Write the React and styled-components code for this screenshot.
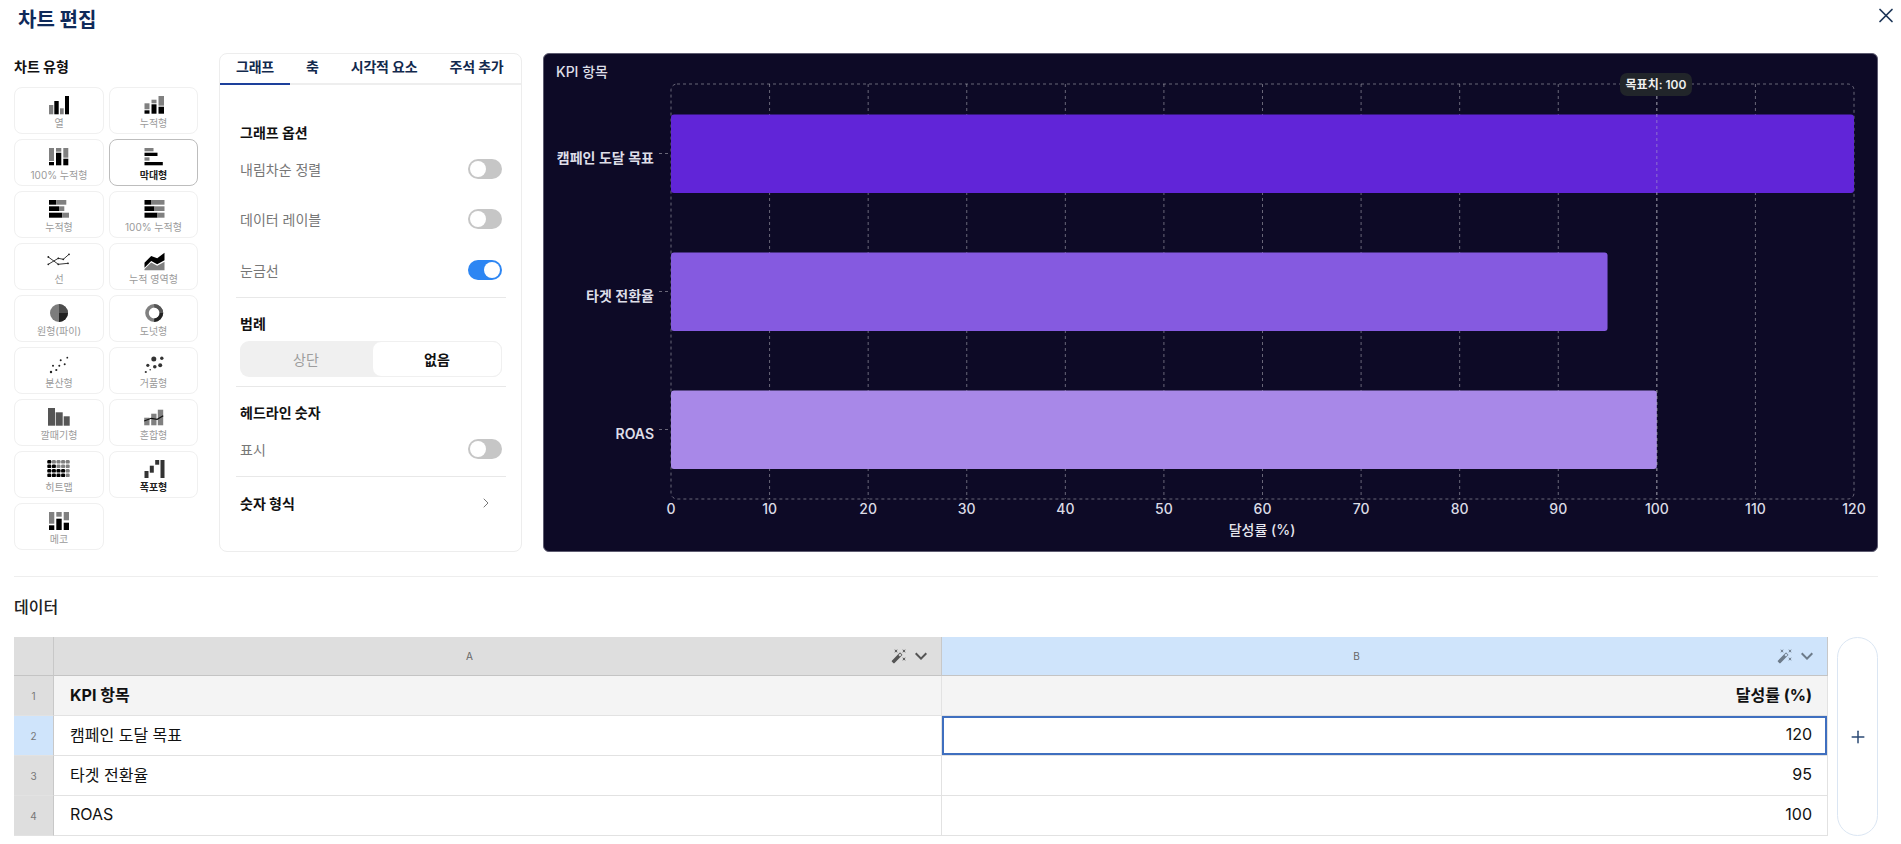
import React from "react";
import styled, { createGlobalStyle } from "styled-components";
import { X, ChevronRight, Plus } from "lucide-react";
import { MdAutoFixHigh, MdExpandMore } from "react-icons/md";

const Global = createGlobalStyle`
  html, body { margin: 0; padding: 0; background: #fff; }
  body { font-family: Inter, "Noto Sans CJK KR", "Noto Sans", sans-serif; color: #111; overflow: hidden; }
  * { box-sizing: border-box; }
`;

const Page = styled.div`
  position: relative;
  width: 1901px;
  height: 844px;
  padding: 0 23px 0 14px;
`;
const Header = styled.header`
  height: 53px;
  padding: 9px 0 0 4px;
`;
const Title = styled.h1`
  margin: 0;
  font-size: 20px;
  line-height: 22px;
  font-weight: 700;
  color: #0f2a5a;
`;
const CloseButton = styled.button`
  position: absolute;
  top: 3px;
  right: 3px;
  width: 24px;
  height: 24px;
  padding: 0;
  border: 0;
  background: none;
  color: #1c3557;
  display: flex;
  align-items: center;
  justify-content: center;
`;
const Editor = styled.section`
  display: grid;
  grid-template-columns: 184px 303px 1335px;
  column-gap: 21px;
  height: 499px;
`;
const TypeColumn = styled.div`
  display: flex;
  flex-direction: column;
`;
const TypeHeading = styled.h2`
  margin: 4px 0 10px;
  font-size: 14px;
  line-height: 20px;
  font-weight: 700;
  color: #111;
`;
const TypeGrid = styled.div`
  display: grid;
  grid-template-columns: 90px 89px;
  grid-auto-rows: 47px;
  gap: 5px;
`;
const TypeCard = styled.div`
  display: flex;
  flex-direction: column;
  align-items: center;
  padding-top: 7px;
  border-radius: 8px;
  border: 1px solid ${(p) => (p.$active ? "#bdbdbd" : "#f0f0f0")};
  background: #fff;
  svg { display: block; }
`;
const TypeLabel = styled.span`
  margin-top: 1px;
  font-size: 10px;
  line-height: 15px;
  white-space: nowrap;
  color: ${(p) => (p.$strong ? "#222" : "#9a9a9a")};
  font-weight: ${(p) => (p.$strong ? 700 : 400)};
`;
const Panel = styled.div`
  border: 1px solid #ededed;
  border-radius: 8px;
  background: #fff;
`;
const Tabs = styled.div`
  display: flex;
  height: 31px;
  border-bottom: 2px solid #eeeeee;
`;
const Tab = styled.div`
  height: 31px;
  padding: 0 16px;
  font-size: 14px;
  line-height: 26px;
  font-weight: 600;
  letter-spacing: -0.2px;
  color: #12294d;
  white-space: nowrap;
  border-bottom: 2px solid ${(p) => (p.$active ? "#1d409b" : "transparent")};
`;
const PanelBody = styled.div`
  padding: 38px 15px 0 16px;
`;
const Group = styled.div`
  padding: ${(p) => p.$top || 0}px 4px ${(p) => p.$bottom || 0}px;
  border-bottom: ${(p) => (p.$divided ? "1px solid #e8e8e8" : "0")};
`;
const GroupTitle = styled.h3`
  margin: 0 0 ${(p) => p.$gap ?? 16}px;
  font-size: 14px;
  line-height: 20px;
  font-weight: 700;
  color: #111;
`;
const OptionRow = styled.div`
  display: flex;
  align-items: center;
  justify-content: space-between;
  height: 20px;
  margin-top: ${(p) => p.$gap || 0}px;
  font-size: 14px;
  color: #777;
`;
const Toggle = styled.span`
  display: flex;
  align-items: center;
  justify-content: ${(p) => (p.$on ? "flex-end" : "flex-start")};
  width: 34px;
  height: 20px;
  padding: 2px;
  border-radius: 10px;
  background: ${(p) => (p.$on ? "#2d86f3" : "#c6c6c6")};
  &::after {
    content: "";
    width: 16px;
    height: 16px;
    border-radius: 50%;
    background: #fff;
  }
`;
const Segment = styled.div`
  display: grid;
  grid-template-columns: 132px 1fr;
  height: 36px;
  border-radius: 9px;
  background: #f0f0f0;
`;
const SegmentItem = styled.div`
  display: flex;
  align-items: center;
  justify-content: center;
  font-size: 14px;
  border-radius: 9px;
  color: ${(p) => (p.$active ? "#111" : "#9d9d9d")};
  font-weight: ${(p) => (p.$active ? 600 : 400)};
  background: ${(p) => (p.$active ? "#fff" : "transparent")};
  border: ${(p) => (p.$active ? "1px solid #f0f0f0" : "0")};
`;
const LinkRow = styled.div`
  display: flex;
  align-items: center;
  justify-content: space-between;
  height: 20px;
  padding-right: 8px;
  font-size: 14px;
  font-weight: 700;
  color: #111;
  svg { color: #777; }
`;
const ChartCard = styled.div`
  border: 1px solid #5d5b70;
  border-radius: 6px;
  background: #0d0a26;
  overflow: hidden;
  svg { display: block; width: 100%; height: 100%; }
`;
const Separator = styled.hr`
  margin: 24px 0 0;
  border: 0;
  border-top: 1px solid #eeeeee;
`;
const DataTitle = styled.h2`
  margin: 20px 0;
  font-size: 16px;
  line-height: 20px;
  font-weight: 500;
  color: #222;
`;
const DataRow = styled.div`
  display: flex;
  gap: 9px;
`;
const Sheet = styled.div`
  display: grid;
  width: 1814px;
  grid-template-columns: 40px 888px 886px;
  grid-template-rows: 39px repeat(4, 40px);
`;
const HeadCell = styled.div`
  display: flex;
  align-items: center;
  padding-right: 8px;
  font-size: 10px;
  color: #666;
  background: ${(p) => (p.$selected ? "#cfe4fb" : "#dedede")};
  border-right: 1px solid #c8c8c8;
  border-bottom: 1px solid #c4c4c4;
`;
const HeadLabel = styled.span`
  flex: 1;
  padding-right: 6px;
  text-align: center;
`;
const HeadIcons = styled.span`
  display: flex;
  align-items: center;
  gap: 2px;
  color: ${(p) => (p.$selected ? "#6d7b8a" : "#555")};
`;
const RowNumber = styled.div`
  display: flex;
  align-items: center;
  justify-content: center;
  font-size: 10px;
  color: #777;
  background: ${(p) => (p.$selected ? "#cfe4fb" : "#dedede")};
  border-right: 1px solid #c8c8c8;
  border-bottom: 1px solid #e2e2e2;
`;
const Cell = styled.div`
  display: flex;
  align-items: center;
  justify-content: ${(p) => (p.$right ? "flex-end" : "flex-start")};
  padding: 0 15px 3px 16px;
  font-size: 16px;
  font-weight: ${(p) => (p.$head ? 700 : 400)};
  color: #111;
  background: ${(p) => (p.$head ? "#f4f4f4" : "#fff")};
  border-right: 1px solid #e2e2e2;
  border-bottom: 1px solid #e2e2e2;
  box-shadow: ${(p) => (p.$selected ? "inset 0 0 0 2px #3f6fbf" : "none")};
`;
const AddColumn = styled.button`
  flex: 1;
  display: flex;
  align-items: center;
  justify-content: center;
  padding: 0;
  border: 1px solid #dbe6f3;
  border-radius: 21px;
  background: #fff;
  color: #2b4a75;
`;

const G = "#808080";
const K = "#000";
const Bars = ({ items }) => items.map(([x, y, w, h, c], i) => <rect key={i} x={x} y={y} width={w} height={h} fill={c} />);

const stacked = (rows) => rows.flatMap(([x, w, top, split, bottom]) => [
  [x, top, w, split - 1 - top, G],
  [x, split, w, bottom - split, K],
]);
const hstacked = (rows, x0) => rows.flatMap(([y, h, k, g]) => [
  [x0, y, k - x0, h, K],
  [k, y, g - k, h, G],
]);

const heatColors = [
  [K, G, G, G, G],
  [K, K, G, G, G],
  [K, K, K, K, G],
  [K, K, K, K, G],
];

const icons = {
  column: <Bars items={[[2, 10, 4.3, 9.3, G], [7.3, 6, 4.4, 13.3, K], [13, 13.3, 3.7, 6, G], [18, 1, 4, 18.3, K]]} />,
  stackColumn: <Bars items={stacked([[2.5, 5, 8.3, 15.3, 18.7], [9.5, 5, 4.7, 9.3, 18.7], [16.5, 5.5, 1, 11.7, 18.7]])} />,
  fullColumn: <Bars items={stacked([[2, 5, 1, 15, 18.3], [9, 5.3, 1, 5.7, 18.3], [16.3, 5, 1, 11.7, 18.3]])} />,
  bar: <Bars items={[[2.5, 1, 9, 3.3, G], [2.5, 5.7, 13, 3.3, K], [2.5, 10.3, 5, 3.4, G], [2.5, 15, 18.3, 3.3, K]]} />,
  stackBar: <Bars items={hstacked([[1, 4.7, 9.3, 19.3], [7.3, 4.7, 12, 17.3], [13.7, 5, 15.3, 22]], 2)} />,
  fullBar: <Bars items={hstacked([[1, 4.7, 9.5, 22.5], [7.3, 4.7, 12.5, 22.5], [13.7, 5, 15.5, 22.5]], 2.5)} />,
  line: (
    <g fill="none" stroke="#222" strokeWidth="0.9">
      <polyline points="1.3,6 11.3,13.3 21,12.3" />
      <polyline points="1.3,13.3 11.3,7.3 16.3,8.3 22,3.3" />
      <g fill="#222" stroke="none">
        {[[1.3, 6], [11.3, 13.3], [21, 12.3], [1.3, 13.3], [11.3, 7.3], [16.3, 8.3], [22, 3.3]].map(([x, y], i) => <circle key={i} cx={x} cy={y} r="0.9" />)}
      </g>
    </g>
  ),
  area: (
    <g>
      <polygon points="2.5,11.7 9.2,5 15.2,7.3 22.5,1.7 22.5,9.3 15.2,13.3 9.2,10 2.5,16.7" fill={K} />
      <polygon points="2.5,18 9.2,11.5 15.2,14.8 22.5,10.8 22.5,19.3 2.5,19.3" fill={G} />
    </g>
  ),
  pie: (
    <g>
      <circle cx="12" cy="10" r="9" fill="#7c7c7c" />
      <path d="M12 10V1A9 9 0 0 1 21 10Z" fill="#4d4d4d" />
      <path d="M12 10H21A9 9 0 0 1 12 19Z" fill="#222" />
    </g>
  ),
  donut: (
    <g fill="none" strokeWidth="3.6">
      <circle cx="12.2" cy="10" r="7.2" stroke="#808080" />
      <path d="M12.2 2.8A7.2 7.2 0 0 1 19.4 10" stroke="#555" />
      <path d="M19.4 10A7.2 7.2 0 0 1 12.2 17.2" stroke="#222" />
    </g>
  ),
  scatter: (
    <g fill="#222">
      {[[4, 17, 1.2], [9.3, 15, 1.1], [6, 10.7, 1], [12.3, 10.7, 1], [13.7, 5.3, 1], [17.7, 9.3, 1], [20.3, 2.7, 0.9]].map(([x, y, r], i) => <circle key={i} cx={x} cy={y} r={r} />)}
    </g>
  ),
  bubble: (
    <g fill="#333">
      {[[3.8, 17, 1.1], [8.2, 14.7, 0.8], [5.8, 10.3, 1.6], [12.8, 11.7, 1.8], [18.2, 10.3, 2], [11.8, 4, 2.5], [19.8, 3.3, 1.7]].map(([x, y, r], i) => <circle key={i} cx={x} cy={y} r={r} />)}
    </g>
  ),
  funnel: <Bars items={[[1, 1, 7, 17.7, "#555"], [8.7, 5.3, 7, 13.4, "#555"], [16.7, 9.3, 6, 9.4, "#555"]]} />,
  combo: (
    <g>
      <Bars items={[[2.2, 10.7, 5.3, 7.6, G], [9.2, 6.7, 5.3, 11.6, G], [15.8, 2.7, 5.4, 15.6, G]]} />
      <polyline points="2.2,14 9.2,11.3 15.2,12.3 21.2,8.7" fill="none" stroke="#111" strokeWidth="1.2" />
    </g>
  ),
  heatmap: (
    <g>
      {heatColors.flatMap((row, r) => row.map((c, i) => (
        <rect key={`${r}-${i}`} x={0.3 + i * 4.6} y={1 + r * 4.5} width="4" height="3.6" rx="1.2" fill={c} />
      )))}
    </g>
  ),
  waterfall: <Bars items={[[2.5, 12, 4, 7, "#333"], [7.8, 6.7, 4, 7, "#333"], [13.2, 1, 4, 4.7, "#333"], [18.5, 1, 4, 18, "#333"]]} />,
  mekko: <Bars items={[[2, 1, 5.3, 11.7, G], [2, 14.3, 5.3, 4.7, K], [9.3, 1, 5.4, 4.7, G], [9.3, 7.7, 5.4, 11.3, K], [16.7, 1, 5.3, 8.3, G], [16.7, 11.7, 5.3, 7.3, K]]} />,
};

const types = [
  ["column", "열"],
  ["stackColumn", "누적형"],
  ["fullColumn", "100% 누적형"],
  ["bar", "막대형", true, true],
  ["stackBar", "누적형"],
  ["fullBar", "100% 누적형"],
  ["line", "선"],
  ["area", "누적 영역형"],
  ["pie", "원형(파이)"],
  ["donut", "도넛형"],
  ["scatter", "분산형"],
  ["bubble", "거품형"],
  ["funnel", "깔때기형"],
  ["combo", "혼합형"],
  ["heatmap", "히트맵"],
  ["waterfall", "폭포형", false, true],
  ["mekko", "메코"],
];

const PLOT = { left: 671, right: 1854, top: 84, bottom: 499 };
const xAt = (v) => PLOT.left + ((PLOT.right - PLOT.left) * v) / 120;
const ticks = Array.from({ length: 13 }, (_, i) => i * 10);
const series = [
  { label: "캠페인 도달 목표", value: 120, y: 114.5, color: "#6125d8" },
  { label: "타겟 전환율", value: 95, y: 252.5, color: "#855ae0" },
  { label: "ROAS", value: 100, y: 390.5, color: "#a888e8" },
];
const gridStroke = { stroke: "rgba(255,255,255,0.38)", strokeWidth: 1, strokeDasharray: "3 3", fill: "none" };
const textFont = 'Inter, "Noto Sans CJK KR", sans-serif';

const Chart = () => (
  <svg viewBox="544 54 1333 497" fontFamily={textFont}>
    <text x="556" y="77" fontSize="14" fontWeight="500" fill="#dfdfe8">KPI 항목</text>
    <rect x={PLOT.left} y={PLOT.top} width={PLOT.right - PLOT.left} height={PLOT.bottom - PLOT.top} rx="6" {...gridStroke} />
    {ticks.slice(1, 12).map((t) => (
      <line key={t} x1={xAt(t)} x2={xAt(t)} y1={PLOT.top} y2={PLOT.bottom} {...gridStroke} />
    ))}
    {series.map((s) => (
      <g key={s.label}>
        <rect x={PLOT.left} y={s.y} width={xAt(s.value) - PLOT.left} height="78.5" rx="3" fill={s.color} />
        <line x1="659" x2="671" y1={s.y + 39} y2={s.y + 39} {...gridStroke} />
        <text x="654" y={s.y + 48} fontSize="14" fontWeight="600" textAnchor="end" fill="#dedee8">{s.label}</text>
      </g>
    ))}
    <line x1={xAt(100)} x2={xAt(100)} y1={PLOT.top} y2={PLOT.bottom} stroke="rgba(190,190,200,0.5)" strokeDasharray="3 3" />
    <rect x="1620" y="73" width="72" height="23" rx="7" fill="#21252a" />
    <text x="1656" y="89" fontSize="12" fontWeight="600" textAnchor="middle" fill="#eeeeee">목표치: 100</text>
    {ticks.map((t) => (
      <text key={t} x={xAt(t)} y="514" fontSize="14" fontWeight="500" textAnchor="middle" fill="#dcdce6">{t}</text>
    ))}
    <text x="1262" y="535" fontSize="14" fontWeight="500" textAnchor="middle" fill="#e6e6ee">달성률 (%)</text>
  </svg>
);

const HeadTools = ({ selected }) => (
  <HeadIcons $selected={selected}>
    <MdAutoFixHigh size={16} />
    <MdExpandMore size={24} />
  </HeadIcons>
);

const rows = [
  ["1", "KPI 항목", "달성률 (%)"],
  ["2", "캠페인 도달 목표", "120"],
  ["3", "타겟 전환율", "95"],
  ["4", "ROAS", "100"],
];

export default function App() {
  return (
    <Page>
      <Global />
      <Header><Title>차트 편집</Title></Header>
      <CloseButton aria-label="닫기"><X size={25} strokeWidth={1.7} /></CloseButton>
      <Editor>
        <TypeColumn>
          <TypeHeading>차트 유형</TypeHeading>
          <TypeGrid>
            {types.map(([key, label, active, strong], i) => (
              <TypeCard key={i} $active={active}>
                <svg width="24" height="20" viewBox="0 0 24 20">{icons[key]}</svg>
                <TypeLabel $strong={strong}>{label}</TypeLabel>
              </TypeCard>
            ))}
          </TypeGrid>
        </TypeColumn>
        <Panel>
          <Tabs>
            <Tab $active>그래프</Tab>
            <Tab>축</Tab>
            <Tab>시각적 요소</Tab>
            <Tab>주석 추가</Tab>
          </Tabs>
          <PanelBody>
            <Group $divided $bottom={17}>
              <GroupTitle>그래프 옵션</GroupTitle>
              <OptionRow>내림차순 정렬<Toggle /></OptionRow>
              <OptionRow $gap={30}>데이터 레이블<Toggle /></OptionRow>
              <OptionRow $gap={31}>눈금선<Toggle $on /></OptionRow>
            </Group>
            <Group $divided $top={16} $bottom={9}>
              <GroupTitle $gap={7}>범례</GroupTitle>
              <Segment>
                <SegmentItem>상단</SegmentItem>
                <SegmentItem $active>없음</SegmentItem>
              </Segment>
            </Group>
            <Group $divided $top={16} $bottom={17}>
              <GroupTitle>헤드라인 숫자</GroupTitle>
              <OptionRow>표시<Toggle /></OptionRow>
            </Group>
            <Group $top={16}>
              <LinkRow>숫자 형식<ChevronRight size={16} strokeWidth={1.5} /></LinkRow>
            </Group>
          </PanelBody>
        </Panel>
        <ChartCard><Chart /></ChartCard>
      </Editor>
      <Separator />
      <DataTitle>데이터</DataTitle>
      <DataRow>
        <Sheet>
          <HeadCell />
          <HeadCell><HeadLabel>A</HeadLabel><HeadTools /></HeadCell>
          <HeadCell $selected><HeadLabel>B</HeadLabel><HeadTools selected /></HeadCell>
          {rows.map(([n, a, b], i) => (
            <React.Fragment key={n}>
              <RowNumber $selected={i === 1}>{n}</RowNumber>
              <Cell $head={i === 0}>{a}</Cell>
              <Cell $head={i === 0} $right $selected={i === 1}>{b}</Cell>
            </React.Fragment>
          ))}
        </Sheet>
        <AddColumn aria-label="열 추가"><Plus size={20} strokeWidth={1.8} /></AddColumn>
      </DataRow>
    </Page>
  );
}
